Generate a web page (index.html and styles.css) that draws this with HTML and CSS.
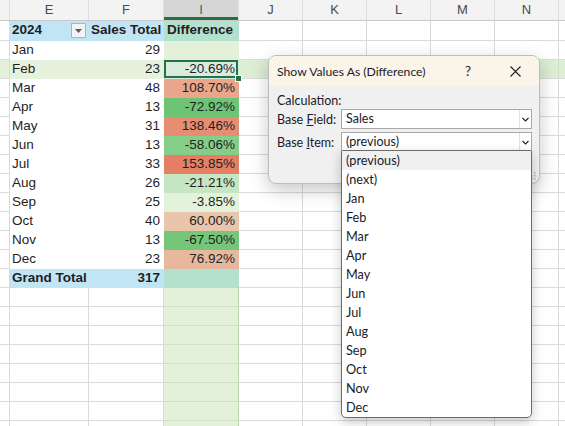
FILE: index.html
```html
<!DOCTYPE html>
<html lang="en">
<head>
  <meta charset="UTF-8">
  <title>Show Values As</title>
  <link rel="stylesheet" href="styles.css">
</head>
<body>
  <div class="sheet">
    <div class="colheads">
      <div class="ch"></div>
      <div class="ch">E</div>
      <div class="ch">F</div>
      <div class="ch sel">I</div>
      <div class="ch">J</div>
      <div class="ch">K</div>
      <div class="ch">L</div>
      <div class="ch">M</div>
      <div class="ch">N</div>
      <div class="ch"></div>
    </div>

    <div class="row first">
      <div class="c"></div>
      <div class="c pv hd b">2024 <span class="filter"><svg width="7" height="4" viewBox="0 0 7 4"><path d="M0 0h7L3.5 4z" fill="#595959"/></svg></span></div>
      <div class="c pv hd b num">Sales Total</div>
      <div class="c pv hdi b">Difference</div>
      <div class="rest"></div>
    </div>
    <div class="row">
      <div class="c"></div>
      <div class="c pv">Jan</div>
      <div class="c pv num">29</div>
      <div class="c pv ci"></div>
      <div class="rest"></div>
    </div>
    <div class="row cur">
      <div class="c"></div>
      <div class="c pv">Feb</div>
      <div class="c pv num">23</div>
      <div class="c pv ci num active">-20.69%</div>
      <div class="rest"></div>
    </div>
    <div class="row">
      <div class="c"></div>
      <div class="c pv">Mar</div>
      <div class="c pv num">48</div>
      <div class="c pv num" style="background:#e9a68c">108.70%</div>
      <div class="rest"></div>
    </div>
    <div class="row">
      <div class="c"></div>
      <div class="c pv">Apr</div>
      <div class="c pv num">13</div>
      <div class="c pv num" style="background:#6ec474">-72.92%</div>
      <div class="rest"></div>
    </div>
    <div class="row">
      <div class="c"></div>
      <div class="c pv">May</div>
      <div class="c pv num">31</div>
      <div class="c pv num" style="background:#e68e73">138.46%</div>
      <div class="rest"></div>
    </div>
    <div class="row">
      <div class="c"></div>
      <div class="c pv">Jun</div>
      <div class="c pv num">13</div>
      <div class="c pv num" style="background:#86cd8a">-58.06%</div>
      <div class="rest"></div>
    </div>
    <div class="row">
      <div class="c"></div>
      <div class="c pv">Jul</div>
      <div class="c pv num">33</div>
      <div class="c pv num" style="background:#e47f65">153.85%</div>
      <div class="rest"></div>
    </div>
    <div class="row">
      <div class="c"></div>
      <div class="c pv">Aug</div>
      <div class="c pv num">26</div>
      <div class="c pv num" style="background:#c6e5c3">-21.21%</div>
      <div class="rest"></div>
    </div>
    <div class="row">
      <div class="c"></div>
      <div class="c pv">Sep</div>
      <div class="c pv num">25</div>
      <div class="c pv num" style="background:#e3f2da">-3.85%</div>
      <div class="rest"></div>
    </div>
    <div class="row">
      <div class="c"></div>
      <div class="c pv">Oct</div>
      <div class="c pv num">40</div>
      <div class="c pv num" style="background:#e9c5ab">60.00%</div>
      <div class="rest"></div>
    </div>
    <div class="row">
      <div class="c"></div>
      <div class="c pv">Nov</div>
      <div class="c pv num">13</div>
      <div class="c pv num" style="background:#75c679">-67.50%</div>
      <div class="rest"></div>
    </div>
    <div class="row">
      <div class="c"></div>
      <div class="c pv">Dec</div>
      <div class="c pv num">23</div>
      <div class="c pv num" style="background:#e8b89e">76.92%</div>
      <div class="rest"></div>
    </div>
    <div class="row">
      <div class="c"></div>
      <div class="c pv hd b">Grand Total</div>
      <div class="c pv hd b num">317</div>
      <div class="c pv hdi"></div>
      <div class="rest"></div>
    </div>
    <div class="row"><div class="c"></div><div class="c"></div><div class="c"></div><div class="c ci"></div><div class="rest"></div></div>
    <div class="row"><div class="c"></div><div class="c"></div><div class="c"></div><div class="c ci"></div><div class="rest"></div></div>
    <div class="row"><div class="c"></div><div class="c"></div><div class="c"></div><div class="c ci"></div><div class="rest"></div></div>
    <div class="row"><div class="c"></div><div class="c"></div><div class="c"></div><div class="c ci"></div><div class="rest"></div></div>
    <div class="row"><div class="c"></div><div class="c"></div><div class="c"></div><div class="c ci"></div><div class="rest"></div></div>
    <div class="row"><div class="c"></div><div class="c"></div><div class="c"></div><div class="c ci"></div><div class="rest"></div></div>
    <div class="row"><div class="c"></div><div class="c"></div><div class="c"></div><div class="c ci"></div><div class="rest"></div></div>
    <div class="row"><div class="c"></div><div class="c"></div><div class="c"></div><div class="c ci"></div><div class="rest"></div></div>

    <!-- dialog -->
    <div class="dialog">
      <div class="dlg-title">
        <span class="dlg-name">Show Values As (Difference)</span>
        <span class="dlg-help">?</span>
        <svg class="dlg-close" width="11" height="11" viewBox="0 0 11 11"><path d="M0.5 0.5l10 10M10.5 0.5l-10 10" stroke="#222" stroke-width="1.1"/></svg>
      </div>
      <div class="dlg-body">
        <div class="dlg-line">Calculation:</div>
        <div class="field">
          <label>Base <u>F</u>ield:</label>
          <div class="combo">
            <span class="combo-val">Sales</span>
            <span class="combo-btn"><svg width="7" height="5" viewBox="0 0 7 5"><path d="M0.5 1l3 3 3-3" fill="none" stroke="#222" stroke-width="1.1"/></svg></span>
          </div>
        </div>
        <div class="field">
          <label>Base <u>I</u>tem:</label>
          <div class="combo">
            <span class="combo-val">(previous)</span>
            <span class="combo-btn"><svg width="7" height="5" viewBox="0 0 7 5"><path d="M0.5 1l3 3 3-3" fill="none" stroke="#222" stroke-width="1.1"/></svg></span>
          </div>
        </div>
      </div>
      <svg class="grip" width="9" height="9" viewBox="0 0 9 9">
        <rect x="7" y="1" width="1.5" height="1.5" fill="#b0b0b0"/>
        <rect x="4" y="4" width="1.5" height="1.5" fill="#b0b0b0"/>
        <rect x="7" y="4" width="1.5" height="1.5" fill="#b0b0b0"/>
        <rect x="1" y="7" width="1.5" height="1.5" fill="#b0b0b0"/>
        <rect x="4" y="7" width="1.5" height="1.5" fill="#b0b0b0"/>
        <rect x="7" y="7" width="1.5" height="1.5" fill="#b0b0b0"/>
      </svg>
    </div>

    <ul class="droplist">
      <li class="hover">(previous)</li>
      <li>(next)</li>
      <li>Jan</li>
      <li>Feb</li>
      <li>Mar</li>
      <li>Apr</li>
      <li>May</li>
      <li>Jun</li>
      <li>Jul</li>
      <li>Aug</li>
      <li>Sep</li>
      <li>Oct</li>
      <li>Nov</li>
      <li>Dec</li>
    </ul>
  </div>
</body>
</html>
```

FILE: styles.css
```css
body {
  margin: 0;
  background: #fff;
  font-family: 'Liberation Sans', Arial, sans-serif;
  color: #1f1f1f;
}

.sheet {
  position: relative;
  width: 565px;
  height: 426px;
  overflow: hidden;
  background: #fff;
}

/* column letters */
.colheads {
  display: grid;
  grid-template-columns: 10px 79px 75px 75px repeat(6, 64px);
  height: 21px;
  background: #f3f3f3;
  border-bottom: 1px solid #c9c9c9;
  box-sizing: border-box;
}

.ch {
  border-right: 1px solid #dedede;
  text-align: center;
  font-size: 13px;
  line-height: 20px;
  color: #4a4a4a;
}

.ch.sel {
  background: #d6d6d6;
  color: #217346;
  box-shadow: inset 0 -3px 0 #217346;
}

/* rows */
.row {
  display: grid;
  grid-template-columns: 10px 79px 75px 75px 1fr;
  height: 19px;
}

.row.first {
  height: 20px;
}

.c {
  border-right: 1px solid #dadada;
  border-bottom: 1px solid #dadada;
  font-size: 13.5px;
  line-height: 18px;
  padding: 0 2px;
  white-space: nowrap;
  overflow: hidden;
  position: relative;
}

.rest {
  border-bottom: 1px solid #dadada;
  background: repeating-linear-gradient(to right, transparent 0 63px, #dadada 63px 64px);
}

.pv {
  background: #fff;
  border-color: transparent;
}

.num {
  text-align: right;
  padding-right: 3px;
}

.b {
  font-weight: bold;
}

.hd {
  background: #c1e5f5;
}

.hdi {
  background: #b4e1cd;
  padding-left: 3px;
}

/* selected column I */
.ci {
  background: #e3f0da;
  border-bottom-color: #cfe2c6;
  border-right-color: #b8d7ac;
}

.pv.ci {
  border-color: transparent;
}

/* active row tint */
.row.cur .c:first-child {
  background: #e3f0da;
}

.row.cur .pv {
  background: #e6f2de;
}

.row.cur .rest {
  background: repeating-linear-gradient(to right, transparent 0 63px, #cfe2c5 63px 64px), #ddeed4;
}

.c.active {
  background: #d9ebdf !important;
  overflow: visible;
  box-shadow: inset 0 0 0 2px #217346;
  z-index: 2;
}

.c.active::after {
  content: '';
  position: absolute;
  right: -4px;
  bottom: -4px;
  width: 5px;
  height: 5px;
  background: #217346;
  border: 1px solid #fff;
}

.filter {
  position: absolute;
  right: 2px;
  top: 2px;
  width: 13px;
  height: 13px;
  background: #f4f4f4;
  border: 1px solid #b3b3b3;
  display: flex;
  align-items: center;
  justify-content: center;
}

/* dialog */
.dialog {
  position: absolute;
  left: 268px;
  top: 55px;
  width: 272px;
  height: 129px;
  box-sizing: border-box;
  border: 1px solid #bdbdbd;
  border-radius: 8px;
  background: #f0f0f0;
  box-shadow: 0 6px 18px rgba(0, 0, 0, 0.22);
  font-family: Lato, 'Liberation Sans', sans-serif;
  font-size: 12.5px;
  color: #1a1a2a;
  overflow: hidden;
}

.dlg-title {
  display: flex;
  align-items: center;
  height: 30px;
  padding: 0 0 0 8px;
  background: #faf5e8;
}

.dlg-name {
  flex: 1;
  font-size: 12.2px;
}

.dlg-help {
  width: 20px;
  margin-right: 25px;
  font-size: 13.5px;
}

.dlg-close {
  margin-right: 18px;
}

.dlg-body {
  padding: 6px 7px 0 8px;
}

.dlg-line {
  height: 17px;
  line-height: 17px;
}

.field {
  display: flex;
  align-items: center;
  margin-bottom: 3px;
}

.field label {
  width: 64px;
}

.combo {
  flex: 1;
  display: flex;
  height: 20px;
  box-sizing: border-box;
  background: #fff;
  border: 1px solid #a8a8a8;
}

.combo-val {
  flex: 1;
  padding-left: 4px;
  line-height: 18px;
}

.combo-btn {
  width: 11px;
  border-left: 1px solid #e2e2e2;
  display: flex;
  align-items: center;
  justify-content: center;
}

.grip {
  position: absolute;
  right: 3px;
  bottom: 3px;
}

.droplist {
  position: absolute;
  left: 341px;
  top: 150px;
  width: 191px;
  margin: 0;
  padding: 0;
  list-style: none;
  box-sizing: border-box;
  background: #fff;
  border: 1px solid #6b6b6b;
  border-radius: 2px 2px 5px 5px;
  box-shadow: 0 4px 12px rgba(0, 0, 0, 0.22);
  font-family: Lato, 'Liberation Sans', sans-serif;
  font-size: 12.7px;
  color: #1a1a2a;
}

.droplist li {
  height: 19px;
  line-height: 19px;
  padding-left: 4px;
}

.droplist li.hover {
  background: #f0f0f0;
}
```
